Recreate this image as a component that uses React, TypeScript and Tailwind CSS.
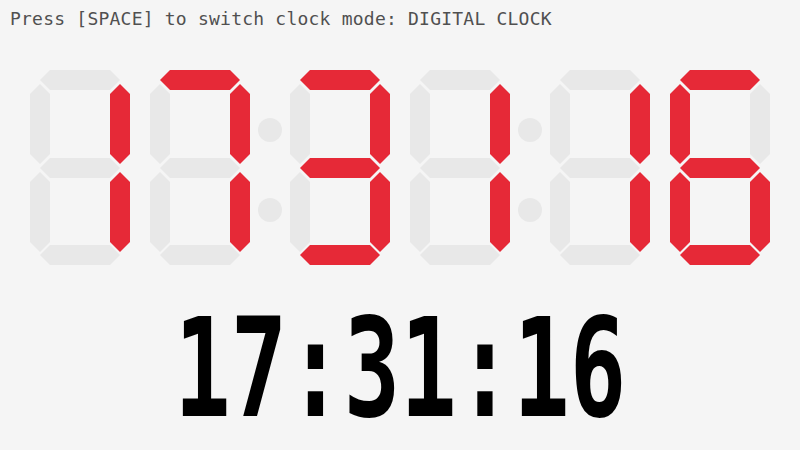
import React from "react";

const ON = "#e62937";
const OFF = "#e8e8e8";

// segment order: a b c d e f g
const DIGITS: Record<string, boolean[]> = {
  "0": [true, true, true, true, true, true, false],
  "1": [false, true, true, false, false, false, false],
  "2": [true, true, false, true, true, false, true],
  "3": [true, true, true, true, false, false, true],
  "4": [false, true, true, false, false, true, true],
  "5": [true, false, true, true, false, true, true],
  "6": [true, false, true, true, true, true, true],
  "7": [true, true, true, false, false, false, false],
  "8": [true, true, true, true, true, true, true],
  "9": [true, true, true, true, false, true, true],
};

function hSeg(cx: number, cy: number) {
  return `${cx - 40},${cy} ${cx - 30},${cy - 10} ${cx + 30},${cy - 10} ${cx + 40},${cy} ${cx + 30},${cy + 10} ${cx - 30},${cy + 10}`;
}

function vSeg(cx: number, cy: number) {
  return `${cx},${cy - 40} ${cx + 10},${cy - 30} ${cx + 10},${cy + 30} ${cx},${cy + 40} ${cx - 10},${cy + 30} ${cx - 10},${cy - 30}`;
}

function SevenSeg({ x, value }: { x: number; value: string }) {
  const on = DIGITS[value];
  const segs = [
    hSeg(x + 50, 80), // a
    vSeg(x + 90, 124), // b
    vSeg(x + 90, 212), // c
    hSeg(x + 50, 255), // d
    vSeg(x + 10, 212), // e
    vSeg(x + 10, 124), // f
    hSeg(x + 50, 168), // g
  ];
  return (
    <g>
      {segs.map((p, i) => (
        <polygon key={i} points={p} fill={on[i] ? ON : OFF} />
      ))}
    </g>
  );
}

export default function App() {
  const time = "173116";
  const xs = [30, 150, 290, 410, 550, 670];

  return (
    <div className="w-[800px] h-[450px] bg-[#f5f5f5] overflow-hidden flex flex-col">
      <div className="h-10 pt-[9px] pl-[10px]">
        <p className="text-[18px] leading-[20px] tracking-[0.22px] text-[#505050] font-['DejaVu_Sans_Mono',monospace] whitespace-pre">
          Press [SPACE] to switch clock mode: DIGITAL CLOCK
        </p>
      </div>

      <svg width="800" height="240" viewBox="0 40 800 240" className="block shrink-0">
        {xs.map((x, i) => (
          <SevenSeg key={i} x={x} value={time[i]} />
        ))}
        <circle cx="270" cy="130" r="12" fill={OFF} />
        <circle cx="270" cy="210" r="12" fill={OFF} />
        <circle cx="530" cy="130" r="12" fill={OFF} />
        <circle cx="530" cy="210" r="12" fill={OFF} />
      </svg>

      <div className="mt-[30px] flex justify-center">
        <span className="inline-block scale-x-[0.68] text-[138px] leading-[118px] font-bold text-black font-['DejaVu_Sans_Mono',monospace] whitespace-pre">
          17:31:16
        </span>
      </div>
    </div>
  );
}
